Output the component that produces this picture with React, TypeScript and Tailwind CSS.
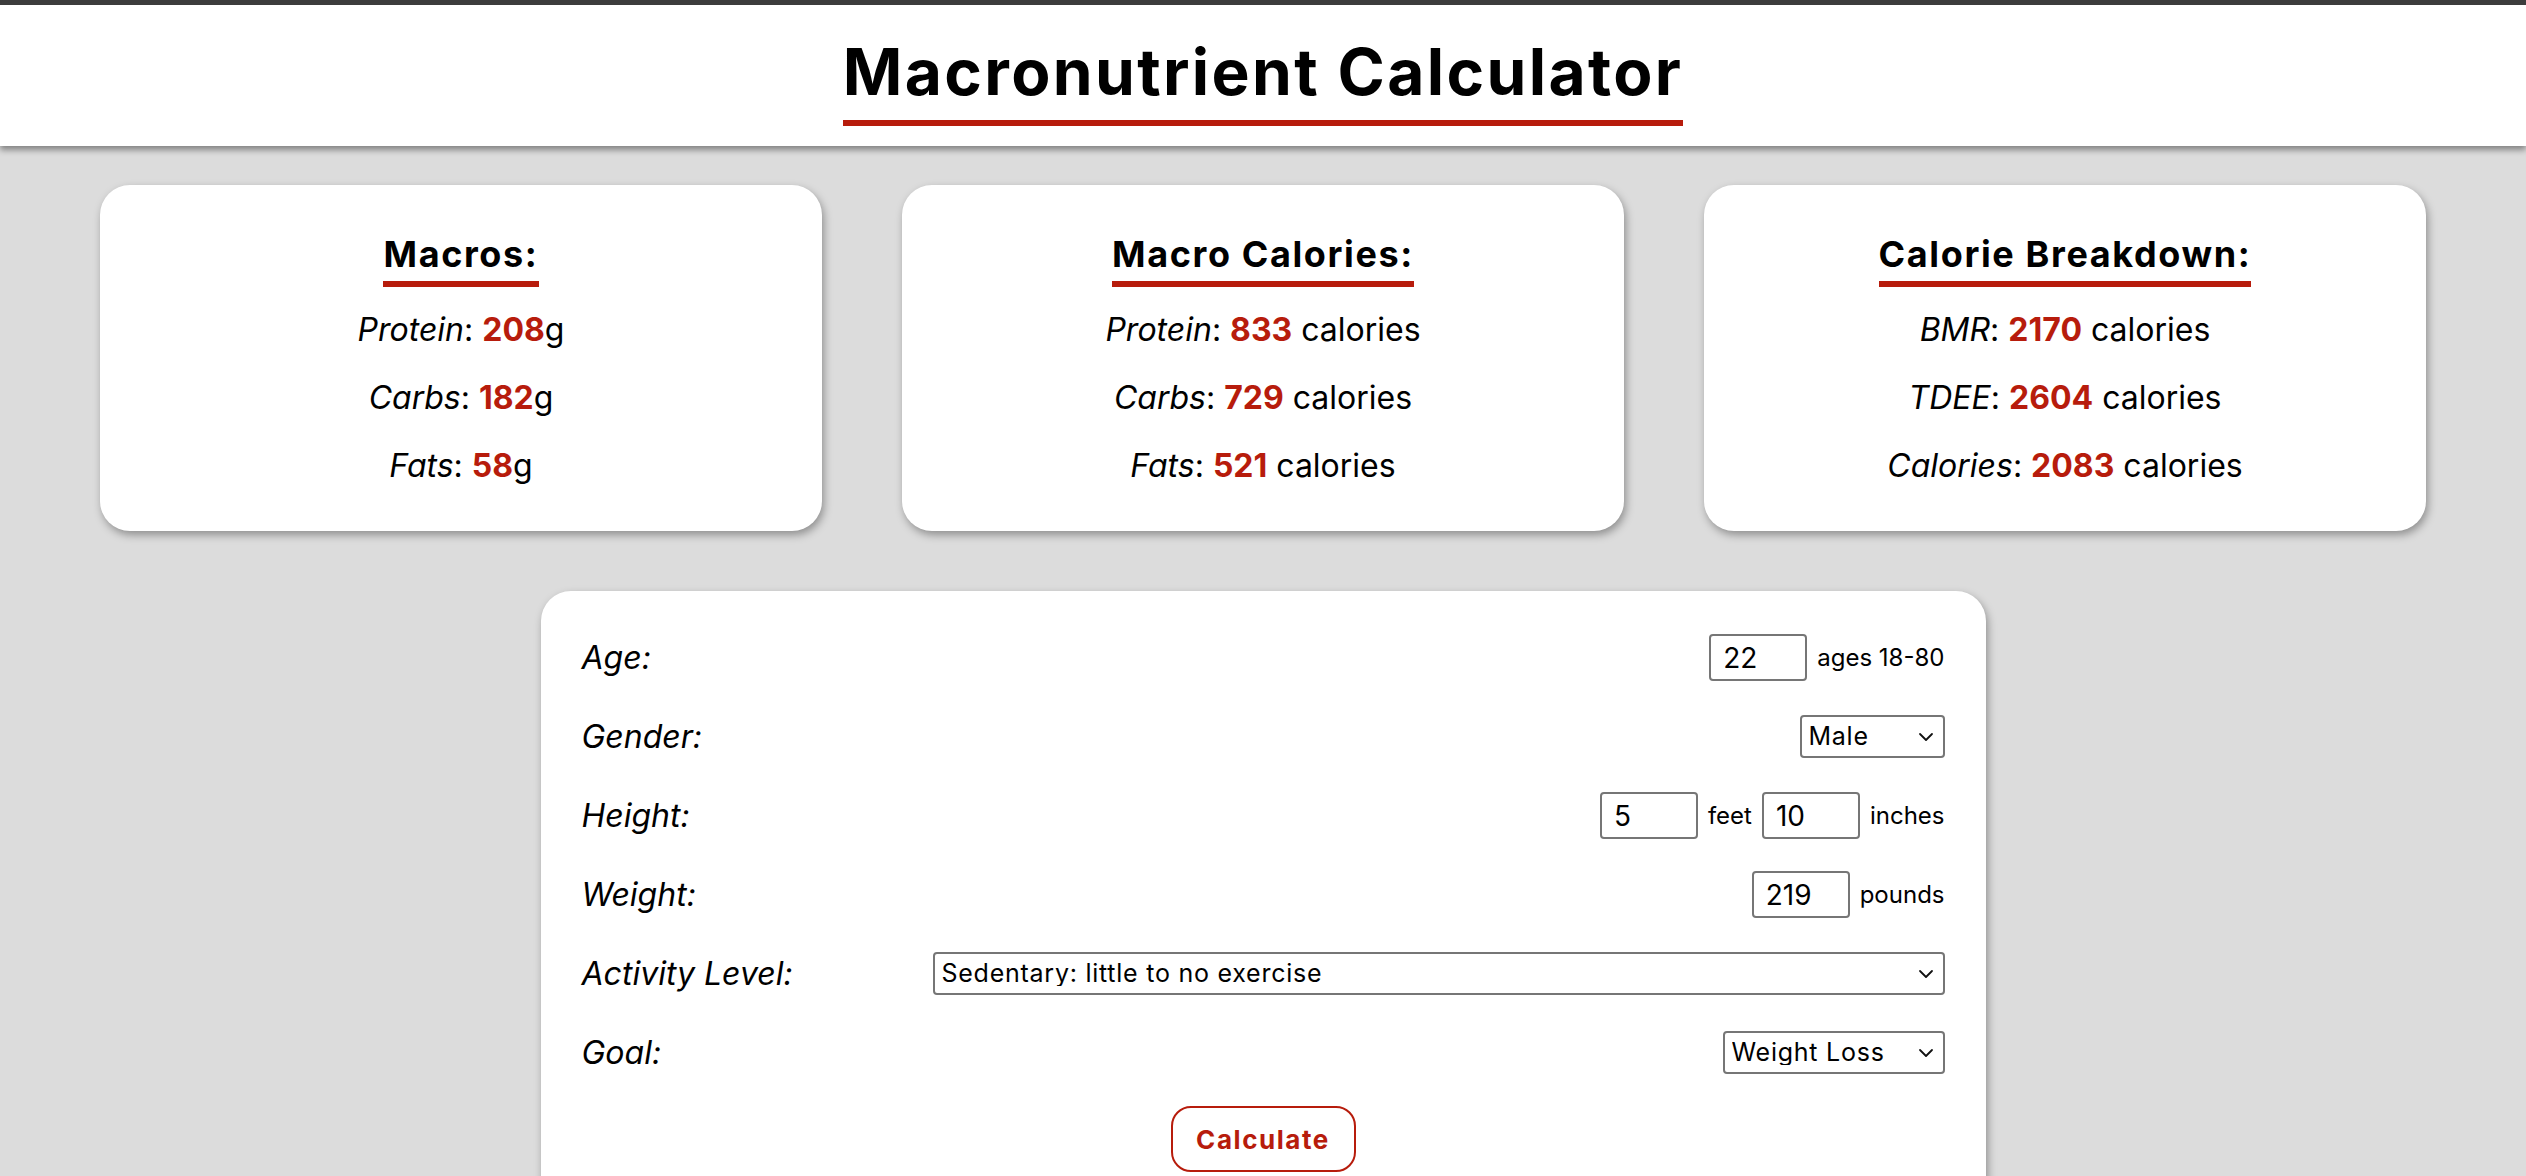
import React from "react";

const RED = "text-[#b71c0c]";

function Chevron() {
  return (
    <svg width="16" height="10" viewBox="0 0 16 10" className="pointer-events-none absolute right-[11px] top-1/2 -translate-y-1/2">
      <path d="M2 2 L8 8 L14 2" fill="none" stroke="#111" strokeWidth="1.8" strokeLinecap="round" strokeLinejoin="round" />
    </svg>
  );
}

function Select({ value, width }: { value: string; width: string }) {
  return (
    <div className={`relative ${width}`}>
      <select
        defaultValue={value}
        className="h-[43px] w-full appearance-none rounded-[4px] border-2 border-[#767676] bg-white pl-[7px] pr-[34px] text-[25px] leading-none tracking-[0.03em] text-black outline-none"
      >
        <option>{value}</option>
      </select>
      <Chevron />
    </div>
  );
}

function NumInput({ value }: { value: string }) {
  return (
    <input
      defaultValue={value}
      className="h-[47px] w-[98px] rounded-[4px] border-2 border-[#767676] bg-white px-[12px] text-[28px] leading-none text-black outline-none"
    />
  );
}

function Line({ label, value, unit }: { label: string; value: string; unit: string }) {
  return (
    <p className="h-[68px] text-[32px] leading-[68px] text-black">
      <i>{label}</i>: <b className={`font-bold ${RED}`}>{value}</b>
      {unit}
    </p>
  );
}

function Card({ title, lines }: { title: string; lines: [string, string, string][] }) {
  return (
    <div className="flex h-[346px] flex-1 flex-col items-center rounded-[30px] bg-white pt-[51px] shadow-[2px_4px_8px_rgba(0,0,0,0.35)]">
      <h2 className="border-b-[6px] border-[#b71c0c] pb-[9px] text-[36px] font-bold leading-none tracking-[0.045em] text-black">{title}</h2>
      <div className="mt-[9px] flex flex-col items-center">
        {lines.map((l) => (
          <Line key={l[0]} label={l[0]} value={l[1]} unit={l[2]} />
        ))}
      </div>
    </div>
  );
}

function Row({ label, children, full }: { label: string; children: React.ReactNode; full?: boolean }) {
  return (
    <div className="grid h-[79px] grid-cols-[351px_1fr] items-center">
      <div className="text-[32px] italic text-black">{label}:</div>
      <div className={`flex items-center gap-[10px] ${full ? "" : "justify-end"}`}>{children}</div>
    </div>
  );
}

export default function App() {
  return (
    <div className="min-h-screen bg-[#dcdcdc] font-['Inter',sans-serif] text-black">
      <header className="relative z-10 flex h-[146px] justify-center border-t-[5px] border-[#3c3c3c] bg-white shadow-[0_4px_6px_rgba(0,0,0,0.4)]">
        <div className="pt-[35px]">
          <h1 className="border-b-[6px] border-[#b71c0c] pb-[16px] text-[64px] font-bold leading-none tracking-[0.037em]">Macronutrient Calculator</h1>
        </div>
      </header>

      <main className="pt-[39px]">
        <div className="flex gap-[80px] px-[100px]">
          <Card
            title="Macros:"
            lines={[
              ["Protein", "208", "g"],
              ["Carbs", "182", "g"],
              ["Fats", "58", "g"],
            ]}
          />
          <Card
            title="Macro Calories:"
            lines={[
              ["Protein", "833", " calories"],
              ["Carbs", "729", " calories"],
              ["Fats", "521", " calories"],
            ]}
          />
          <Card
            title="Calorie Breakdown:"
            lines={[
              ["BMR", "2170", " calories"],
              ["TDEE", "2604", " calories"],
              ["Calories", "2083", " calories"],
            ]}
          />
        </div>

        <div className="mx-auto mt-[60px] w-[1445px] rounded-[30px] bg-white px-[41px] pb-[40px] pt-[27px] shadow-[2px_4px_8px_rgba(0,0,0,0.35)]">
          <Row label="Age">
            <NumInput value="22" />
            <span className="text-[24px]">ages 18-80</span>
          </Row>
          <Row label="Gender">
            <Select value="Male" width="w-[145px]" />
          </Row>
          <Row label="Height">
            <NumInput value="5" />
            <span className="text-[24px]">feet</span>
            <NumInput value="10" />
            <span className="text-[24px]">inches</span>
          </Row>
          <Row label="Weight">
            <NumInput value="219" />
            <span className="text-[24px]">pounds</span>
          </Row>
          <Row label="Activity Level" full>
            <Select value="Sedentary: little to no exercise" width="w-full" />
          </Row>
          <Row label="Goal">
            <Select value="Weight Loss" width="w-[222px]" />
          </Row>
          <div className="flex justify-center pt-[14px]">
            <button className={`h-[66px] w-[185px] rounded-[20px] border-2 border-[#b71c0c] bg-white text-[26px] font-bold tracking-[0.06em] ${RED}`}>
              Calculate
            </button>
          </div>
        </div>
      </main>
    </div>
  );
}
